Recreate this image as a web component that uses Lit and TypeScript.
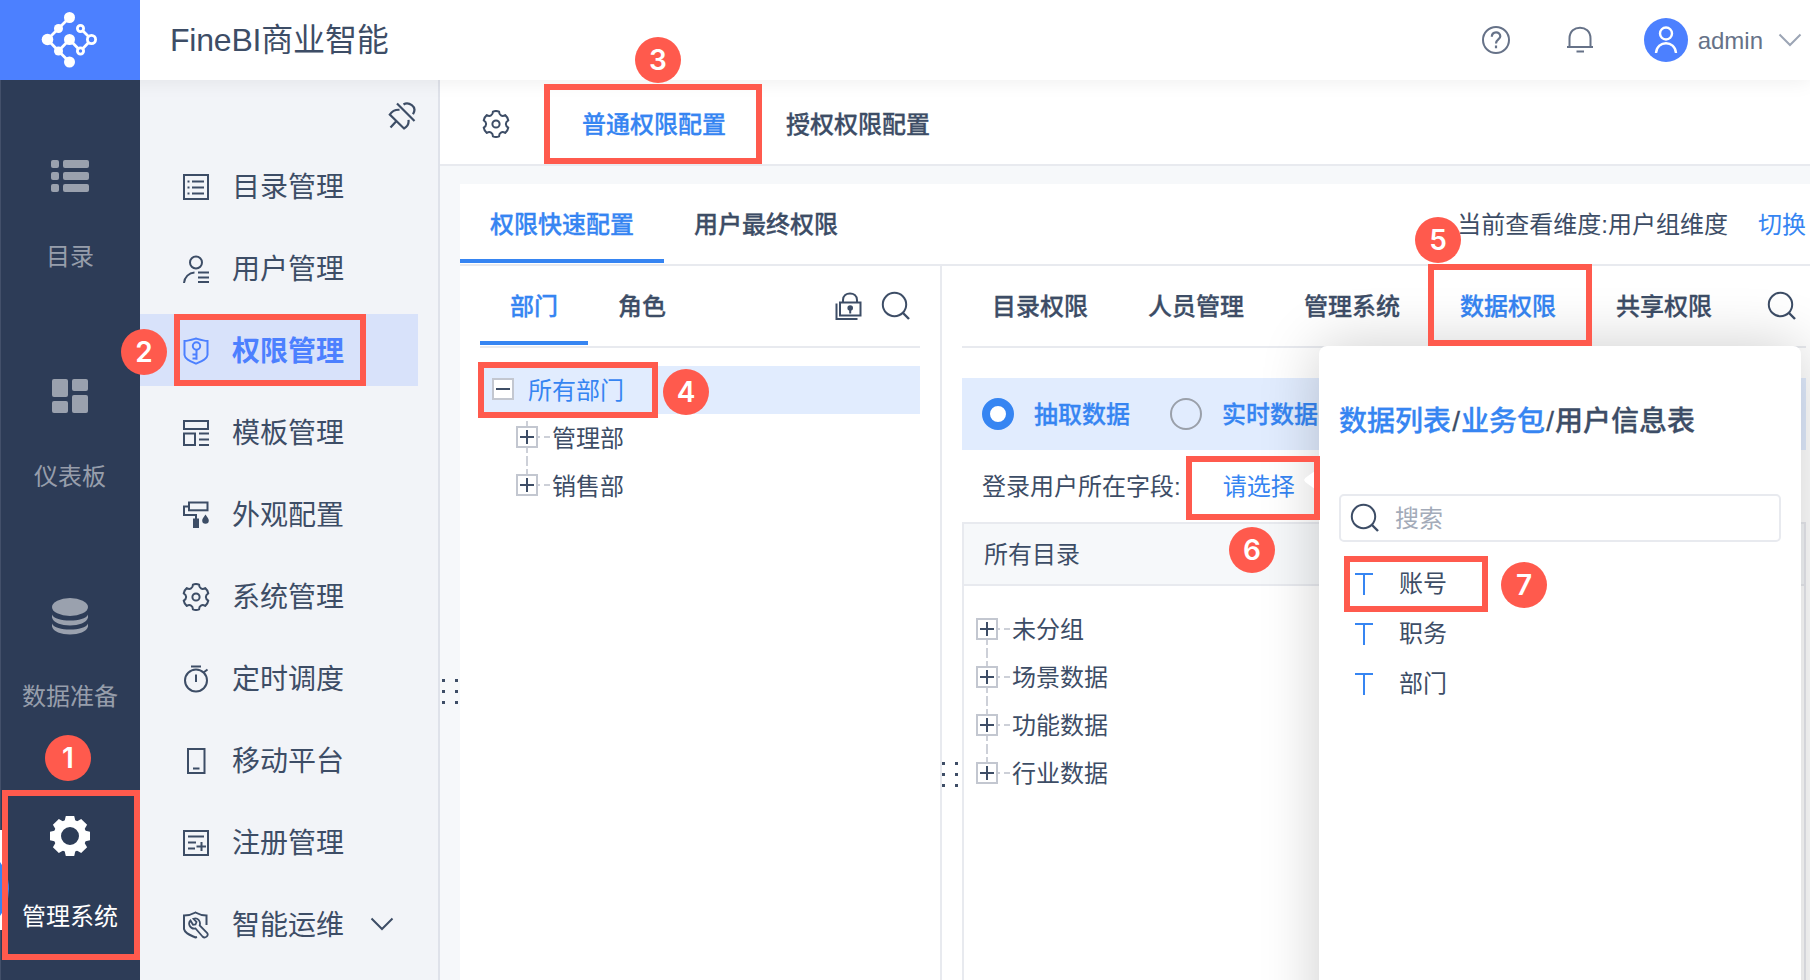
/**
 * FineBI admin console: permission management page with the numbered
 * walkthrough marks on top.
 */

import { LitElement, html, css, svg, nothing } from 'lit';
import { customElement, property, state } from 'lit/decorators.js';
import { classMap } from 'lit/directives/class-map.js';
import { styleMap } from 'lit/directives/style-map.js';

const polar = (r: number, deg: number) => {
  const a = (deg * Math.PI) / 180;
  return `${(14 + r * Math.sin(a)).toFixed(2)} ${(14 - r * Math.cos(a)).toFixed(2)}`;
};

// Six-lobed gear outline on the 28px grid
const gearPath = () => {
  let d = `M${polar(12.8, -14)}`;
  for (let a = 0; a < 360; a += 60) {
    d += `Q${polar(13.6, a)} ${polar(12.8, a + 14)}`;
    d += `C${polar(9.2, a + 19)} ${polar(9.2, a + 41)} ${polar(12.8, a + 46)}`;
  }
  return d + 'Z';
};

const teeth = [0, 45, 90, 135, 180, 225, 270, 315];

// Every outline icon is drawn on a 28x28 grid unless sized otherwise
const icons: Record<string, { size?: [number, number]; body: unknown }> = {
  logo: {
    size: [60, 60],
    body: svg`
      <path d="M29.5 7.5 18.5 18.5 7.5 29.5 18.5 41 29.5 52M18.5 41 29.5 29.5 40.5 41 51.5 29.5 40.5 18.5" stroke-width="2.8"/>
      <g fill="currentColor" stroke="none">
        <circle cx="29.5" cy="7.5" r="5.5"/><circle cx="18.5" cy="18.5" r="4.5"/>
        <circle cx="7.5" cy="29.5" r="5.8"/><circle cx="29.5" cy="29.5" r="5.5"/>
        <circle cx="18.5" cy="41" r="4.5"/><circle cx="29.5" cy="52" r="5.5"/>
      </g>
      <g fill="#4c80ff" stroke-width="2.8">
        <circle cx="40.5" cy="18.5" r="3.1"/><circle cx="51.5" cy="29.5" r="4.1"/><circle cx="40.5" cy="41" r="3.1"/>
      </g>`,
  },
  list: {
    size: [40, 40],
    body: svg`<g fill="currentColor" stroke="none">
      ${[4, 16, 28].map((y) => svg`<rect x="1" y=${y} width="8" height="8" rx="2"/><rect x="13" y=${y} width="26" height="8" rx="2"/>`)}
    </g>`,
  },
  board: {
    size: [40, 40],
    body: svg`<g fill="currentColor" stroke="none">
      <rect x="2" y="3" width="16" height="18" rx="2"/><rect x="22" y="3" width="16" height="12" rx="2"/>
      <rect x="2" y="25" width="16" height="12" rx="2"/><rect x="22" y="19" width="16" height="18" rx="2"/>
    </g>`,
  },
  database: {
    size: [40, 40],
    body: svg`<g fill="currentColor" stroke="none">
      <ellipse cx="20" cy="11" rx="18" ry="9"/>
      <path d="M2 18.5C5 26.5 35 26.5 38 18.5V21.5C36 32 4 32 2 21.5Z"/>
      <path d="M2 27.5C5 35.5 35 35.5 38 27.5V30.5C36 41 4 41 2 30.5Z"/>
    </g>`,
  },
  cog: {
    size: [40, 40],
    body: svg`<circle cx="20" cy="20" r="12.7" stroke-width="7.4"/>
      <g fill="currentColor" stroke="none">
        ${teeth.map((a) => svg`<path d="M-5.5-14.5-4.2-20H4.2L5.5-14.5Z" transform="translate(20 20) rotate(${a})"/>`)}
      </g>`,
  },
  gear: { body: svg`<path d=${gearPath()} stroke-linejoin="round"/><circle cx="14" cy="14" r="3.6"/>` },
  unpin: {
    body: svg`<path d="M9 1.5 26.5 19M15.5 2.5C20-.5 30 4 25 12.2M11.5 7.800C6.500 7.500 3.800 9.500 1.800 12.500L16 26.500C19.500 24.500 21 21.500 20.500 17.800M8.500 19 2.500 25.500" stroke-width="2.2"/>`,
  },
  catalog: {
    body: svg`<rect x="2" y="2" width="24" height="24"/><path d="M10 8.500H22M10 14.500H22M10 20.500H22M5.500 8.500H7.500M5.500 14.500H7.500M5.500 20.500H7.500"/>`,
  },
  user: {
    body: svg`<circle cx="14" cy="7.5" r="6"/><path d="M2 28C2.500 22 7 17.800 12.500 17.500M16 17.500H27M16 22.500H27M16 27H27"/>`,
  },
  shield: {
    body: svg`<path d="M14 1.500C17.500 2.500 21.500 3.800 25.500 4V18C25 22.500 19 24.500 14 26.700 9 24.500 3 22.500 2.500 18V4C6.500 3.800 10.500 2.500 14 1.500Z"/>
      <circle cx="14.5" cy="9" r="3.7"/><path d="M14.500 12.500V22.800M14.500 17.500H10.500M14.500 21.500H10.500"/>`,
  },
  template: {
    body: svg`<rect x="2" y="2" width="24" height="8"/><rect x="2" y="14.5" width="11" height="11.5"/><path d="M17 14.500H27M17 20.500H27M17 26H27"/>`,
  },
  paint: {
    body: svg`<rect x="7" y="1.5" width="18.5" height="7.8"/><path d="M7 5.500H2V14H14V18"/>
      <path d="M11 17.500H17V27H11ZM23.500 13.500C25.500 16.500 26.800 18 26.800 19.500A3.300 3.300 0 0 1 20.200 19.500C20.200 18 21.500 16.500 23.500 13.500Z" fill="currentColor" stroke="none"/>`,
  },
  timer: {
    body: svg`<circle cx="14" cy="15.5" r="11"/><path d="M9 1.500H19M14 9.500V17M21.500 7.500 25.500 4.500"/>`,
  },
  mobile: { body: svg`<rect x="6" y="2" width="16.5" height="24"/><path d="M11 21.500H17.500"/>` },
  register: {
    body: svg`<rect x="2" y="2" width="24" height="24"/><path d="M6 7.500H22M6 13.500H14M6 19.500H13M14.500 17.500H24M19.500 13V22"/>`,
  },
  ops: {
    body: svg`<path d="M24.500 14V4.500C21 4.500 17 3.500 13.500 1.500 10 3.500 6 4.500 2 4.500V18C3 22.500 8 24 13.500 26.500L15 26"/>
      <path d="M8.500 9.500C5.500 12.500 8 18.500 13.500 17.500L20.500 25.500C23 28 27.500 24.500 25 21.800L17.700 14.500C19 9.500 15.500 6.500 11.500 7.800L14.500 11 13.500 13.500 11 13.800Z" stroke-width="1.8"/>`,
  },
  down: { size: [24, 14], body: svg`<path d="M1.500 1.500 12 12 22.500 1.500"/>` },
  help: {
    body: svg`<circle cx="14" cy="14" r="13"/><path d="M9.800 10.800C9.800 5 18.300 5 18.300 10.300 18.300 13.500 14 13.500 14 17.500M14 19.500V22.200" stroke-width="2.2"/>`,
  },
  bell: { body: svg`<path d="M3.500 21V12.500C3.500-2 24.500-2 24.500 12.500V21M1 21H27M10.500 25.500H18"/>` },
  avatar: {
    size: [44, 44],
    body: svg`<circle cx="22" cy="15.5" r="6" stroke-width="2.4"/><path d="M12 35C13 22 31 22 32 35" stroke-width="2.4"/>`,
  },
  lock: {
    body: svg`<rect x="5" y="10.5" width="20.5" height="13"/><path d="M8 10V8C8-.800 22-.800 22 8V10M1.500 11.500V27H22.500M15.200 16V21.500"/>
      <circle cx="15.2" cy="16" r="2.8" fill="currentColor" stroke="none"/>`,
  },
  search: { size: [30, 30], body: svg`<circle cx="13.5" cy="13.5" r="11.7"/><path d="M22 22 28 28" stroke-width="2.4"/>` },
  text: { size: [18, 22], body: svg`<path d="M0 1H18M9 1V22"/>` },
};

const icon = (name: string) => {
  const { size: [w, h] = [28, 28], body } = icons[name];
  return html`<svg width=${w} height=${h} viewBox="0 0 ${w} ${h}" fill="none" stroke="currentColor" stroke-width="2">${body}</svg>`;
};

interface Mark {
  n: number;
  box: [number, number, number, number];
  dot: [number, number];
}

const rail = [
  { icon: 'list', label: '目录' },
  { icon: 'board', label: '仪表板' },
  { icon: 'database', label: '数据准备' },
  { icon: 'cog', label: '管理系统' },
];

const menu = [
  { icon: 'catalog', label: '目录管理' },
  { icon: 'user', label: '用户管理' },
  { icon: 'shield', label: '权限管理' },
  { icon: 'template', label: '模板管理' },
  { icon: 'paint', label: '外观配置' },
  { icon: 'gear', label: '系统管理' },
  { icon: 'timer', label: '定时调度' },
  { icon: 'mobile', label: '移动平台' },
  { icon: 'register', label: '注册管理' },
  { icon: 'ops', label: '智能运维', expandable: true },
];

// box is x, y, width, height; dot is the centre of the number
const marks: Mark[] = [
  { n: 1, box: [2, 790, 138, 170], dot: [68, 758] },
  { n: 2, box: [174, 314, 192, 72], dot: [144, 352] },
  { n: 3, box: [544, 84, 218, 80], dot: [658, 60] },
  { n: 4, box: [478, 362, 180, 56], dot: [686, 392] },
  { n: 5, box: [1428, 264, 164, 82], dot: [1438, 240] },
  { n: 6, box: [1186, 456, 134, 64], dot: [1252, 550] },
  { n: 7, box: [1344, 556, 144, 56], dot: [1524, 585] },
];

@customElement('bi-tree')
export class BiTree extends LitElement {
  static styles = css`
    :host {
      display: block;
    }

    .row {
      display: flex;
      align-items: center;
      height: 48px;
    }

    .row.root {
      padding-left: 12px;
      background: #e1ecfe;
      color: #3685f2;
    }

    .label {
      height: 48px;
      line-height: 50px;
    }

    .row.root .label {
      padding-left: 14px;
    }

    .nested {
      padding-left: 36px;
    }

    .toggle {
      box-sizing: border-box;
      width: 22px;
      height: 22px;
      border: 2px solid #c3c7d0;
      background: #fff;
      color: #3d4d66;
      display: flex;
      flex: none;
    }

    .row.root .toggle {
      margin-bottom: 2px;
    }

    .cell {
      display: flex;
      flex-direction: column;
      align-items: center;
      height: 48px;
      width: 22px;
      flex: none;
    }

    .nested .cell,
    .nested .branch {
      margin-top: -2px;
    }

    .stem {
      width: 2px;
      flex: 1;
      background: repeating-linear-gradient(#cdd0d8 0 5px, transparent 5px 8px);
    }

    .stem.none {
      background: none;
    }

    .branch {
      width: 12px;
      height: 2px;
      margin-right: 2px;
      background: linear-gradient(90deg, #cdd0d8 0 2px, transparent 2px 6px, #cdd0d8 6px 12px);
    }
  `;

  @property() root = '';
  @property({ attribute: false }) nodes: string[] = [];

  private toggle(open: boolean) {
    return html`<span class="toggle">
      <svg width="18" height="18" stroke="currentColor" stroke-width="2">
        <path d=${open ? 'M2 9H16' : 'M2 9H16M9 2V16'} />
      </svg>
    </span>`;
  }

  render() {
    return html`
      ${this.root ? html`<div class="row root">${this.toggle(true)}<span class="label">${this.root}</span></div>` : nothing}
      <div class=${classMap({ nested: !!this.root })}>
        ${this.nodes.map((node, i) => html`
          <div class="row">
            <span class="cell">
              <span class=${classMap({ stem: true, none: !this.root && i === 0 })}></span>
              ${this.toggle(false)}
              <span class=${classMap({ stem: true, none: i === this.nodes.length - 1 })}></span>
            </span>
            <span class="branch"></span>
            <span class="label">${node}</span>
          </div>
        `)}
      </div>
    `;
  }
}

@customElement('app-root')
export class AppRoot extends LitElement {
  static styles = css`
    :host {
      display: flex;
      flex-direction: column;
      position: relative;
      width: 1810px;
      height: 980px;
      overflow: hidden;
      background: #f6f8fa;
      color: #3d4d66;
      font: 24px 'Liberation Sans', 'Noto Sans CJK SC', sans-serif;
      white-space: nowrap;
      --blue: #3685f2;
      --brand: #4c80ff;
      --line: #e8eaef;
      --mark: #ff5a4d;
    }

    svg {
      display: block;
      flex: none;
    }

    header {
      display: flex;
      align-items: center;
      flex: none;
      height: 80px;
      background: #fff;
      box-shadow: 0 0 20px rgba(0, 0, 0, 0.08);
      z-index: 1;
    }

    .logo {
      display: flex;
      box-sizing: border-box;
      width: 140px;
      height: 80px;
      padding: 10px 0 0 40px;
      background: var(--brand);
      color: #fff;
    }

    .product {
      flex: 1;
      padding-left: 30px;
      font-size: 32px;
      letter-spacing: -0.2px;
      line-height: 80px;
    }

    .tools {
      display: flex;
      align-items: center;
      color: #667288;
      padding-right: 8px;
    }

    .tools .bell {
      margin: 0 50px 0 56px;
    }

    .avatar {
      border-radius: 50%;
      background: var(--brand);
      color: #fff;
      margin-right: 10px;
    }

    .tools .name {
      padding-top: 2px;
    }

    .tools .caret {
      margin-left: 15px;
      color: #9ca5b5;
    }

    .shell {
      display: flex;
      flex: 1;
      min-height: 0;
    }

    .rail {
      width: 140px;
      flex: none;
      background: #2d3c57;
      color: rgba(255, 255, 255, 0.52);
      z-index: 2;
      box-shadow: inset 1px 0 #43506a;
    }

    .rail-item {
      display: flex;
      flex-direction: column;
      align-items: center;
      box-sizing: border-box;
      height: 220px;
      padding-top: 76px;
      gap: 41px;
      line-height: 40px;
    }

    .rail-item.active {
      color: #fff;
    }

    .menu {
      box-sizing: border-box;
      width: 300px;
      flex: none;
      border-right: 2px solid #dfe2ea;
      background: #f2f4f8;
    }

    .pin {
      display: flex;
      justify-content: flex-end;
      box-sizing: border-box;
      height: 70px;
      padding: 22px 22px 0 0;
    }

    .menu-item {
      display: flex;
      align-items: center;
      box-sizing: border-box;
      height: 72px;
      margin: 0 20px 10px 0;
      padding: 2px 0 0 42px;
      gap: 22px;
      font-size: 28px;
    }

    .menu-item .label {
      height: 70px;
      line-height: 71px;
    }

    .menu-item.active {
      background: #d8e2fa;
      color: var(--brand);
      font-weight: 700;
    }

    .menu-item .caret {
      margin: -2px 0 0 4px;
    }

    .grip {
      display: grid;
      grid-template-columns: 3px 3px;
      grid-auto-rows: 3px;
      gap: 8px 10px;
    }

    .grip i {
      background: #3d4d66;
    }

    .gutter {
      box-sizing: border-box;
      width: 20px;
      flex: none;
    }

    .gutter.outer {
      padding: 513px 0 0 2px;
    }

    .gutter.inner {
      padding: 496px 0 0 0;
    }

    .main {
      display: flex;
      flex-direction: column;
      flex: 1;
      min-width: 0;
    }

    .topbar {
      display: flex;
      align-items: center;
      box-sizing: border-box;
      height: 86px;
      flex: none;
      padding: 3px 0 0 42px;
      background: #fff;
      border-bottom: 2px solid var(--line);
    }

    .topbar .tab {
      height: 80px;
      padding: 0 0 0 60px;
      line-height: 82px;
    }

    .topbar .tab:first-of-type {
      padding-left: 72px;
    }

    .tab {
      padding: 0 30px;
      font-weight: 500;
      -webkit-text-stroke: 0.3px;
    }

    .tab.active {
      color: var(--blue);
    }

    .body {
      display: flex;
      flex: 1;
      min-height: 0;
    }

    .card {
      display: flex;
      flex-direction: column;
      flex: 1;
      margin-top: 18px;
      background: #fff;
    }

    .tabs {
      display: flex;
      box-sizing: border-box;
      height: 82px;
      flex: none;
      border-bottom: 2px solid var(--line);
      line-height: 82px;
    }

    .tabs .tab {
      box-sizing: border-box;
      height: 79px;
    }

    .tabs .tab.line {
      border-bottom: 4px solid var(--blue);
    }

    .tabs .fill {
      flex: 1;
    }

    .tabs svg {
      align-self: center;
    }

    .switch {
      padding: 0 4px 0 30px;
      color: var(--blue);
    }

    .panes {
      display: flex;
      flex: 1;
      min-height: 0;
    }

    .dept {
      box-sizing: border-box;
      width: 482px;
      flex: none;
      padding: 0 20px;
      border-right: 2px solid var(--line);
    }

    .dept .tabs svg {
      margin-right: 18px;
    }

    .dept .tabs svg:last-child {
      margin-right: 9px;
    }

    .dept bi-tree {
      margin-top: 18px;
    }

    .perm {
      display: flex;
      flex-direction: column;
      flex: 1;
      min-width: 0;
      margin-right: 4px;
    }

    .perm .tabs svg {
      margin-right: 9px;
    }

    .modes {
      display: flex;
      align-items: center;
      height: 72px;
      flex: none;
      margin-top: 30px;
      padding-left: 20px;
      background: #e1ecfe;
      color: var(--blue);
      font-weight: 500;
      -webkit-text-stroke: 0.3px;
    }

    .radio {
      box-sizing: border-box;
      width: 32px;
      height: 32px;
      margin-right: 20px;
      border: 2px solid #9aa0aa;
      border-radius: 50%;
    }

    .radio.on {
      border: 8px solid var(--blue);
      background: #fff;
    }

    .modes .label {
      height: 72px;
      margin-right: 40px;
      line-height: 74px;
    }

    .field {
      display: flex;
      height: 72px;
      flex: none;
      padding-left: 20px;
      line-height: 74px;
    }

    .pick {
      margin-left: 42px;
      color: var(--blue);
    }

    .table {
      flex: 1;
      border: 2px solid var(--line);
      border-bottom: 0;
    }

    .thead {
      height: 60px;
      padding-left: 20px;
      border-bottom: 2px solid var(--line);
      background: #f6f8fa;
      line-height: 62px;
    }

    .table bi-tree {
      margin: 19px 0 0 12px;
    }

    /* Field picker, opened from the "请选择" link */
    .popup {
      position: absolute;
      left: 1319px;
      top: 346px;
      box-sizing: border-box;
      width: 482px;
      height: 700px;
      padding: 52px 20px 0;
      border-radius: 8px;
      background: #fff;
      box-shadow: 0 0 60px rgba(0, 0, 0, 0.2);
      z-index: 3;
    }

    .arrow {
      position: absolute;
      left: -15px;
      top: 122px;
      width: 15px;
      height: 24px;
      background: #fff;
      clip-path: polygon(100% 0, 100% 100%, 8% 58%, 0 50%, 8% 42%);
    }

    .crumbs {
      font-size: 28px;
      font-weight: 500;
      line-height: 48px;
      -webkit-text-stroke: 0.3px;
    }

    .crumbs a {
      color: var(--blue);
    }

    .crumbs .sep {
      display: inline-block;
      width: 10px;
      text-align: center;
    }

    .search {
      display: flex;
      align-items: center;
      box-sizing: border-box;
      height: 48px;
      margin: 48px 0 17px;
      padding-left: 9px;
      gap: 15px;
      border: 2px solid var(--line);
      border-radius: 5px;
      line-height: 46px;
    }

    .search .hint {
      height: 44px;
      color: #a3abb9;
    }

    .option {
      display: flex;
      align-items: center;
      height: 50px;
      padding-left: 16px;
      gap: 26px;
      line-height: 50px;
    }

    .option svg {
      color: var(--blue);
    }

    .mark {
      position: absolute;
      box-sizing: border-box;
      border: 6px solid var(--mark);
      z-index: 4;
    }

    .dot {
      position: absolute;
      width: 46px;
      height: 46px;
      margin: -23px 0 0 -23px;
      border-radius: 50%;
      background: var(--mark);
      color: #fff;
      font: 600 28px/46px Inter, 'Liberation Sans', sans-serif;
      text-align: center;
      z-index: 4;
    }

    /* Docked assistant ball, mostly off the left edge */
    .dock {
      position: absolute;
      left: 0;
      top: 830px;
      width: 10px;
      height: 100px;
      overflow: hidden;
      background: linear-gradient(90deg, #fff 2px, transparent 2px);
      z-index: 3;
    }

    .ball {
      width: 90px;
      height: 90px;
      margin: 14px 0 0 -81px;
      border-radius: 50%;
      background: #3685f2;
    }
  `;

  @state() private railItem = '管理系统';
  @state() private menuItem = '权限管理';

  private grip() {
    return html`<div class="grip">${[1, 2, 3, 4, 5, 6].map(() => html`<i></i>`)}</div>`;
  }

  private renderRail() {
    return html`
      <nav class="rail">
        ${rail.map((r) => html`
          <div class=${classMap({ 'rail-item': true, active: r.label === this.railItem })} @click=${() => (this.railItem = r.label)}>
            ${icon(r.icon)}<span>${r.label}</span>
          </div>
        `)}
      </nav>
    `;
  }

  private renderMenu() {
    return html`
      <nav class="menu">
        <div class="pin">${icon('unpin')}</div>
        ${menu.map((m) => html`
          <div class=${classMap({ 'menu-item': true, active: m.label === this.menuItem })} @click=${() => (this.menuItem = m.label)}>
            ${icon(m.icon)}<span class="label">${m.label}</span>
            ${m.expandable ? html`<span class="caret">${icon('down')}</span>` : nothing}
          </div>
        `)}
      </nav>
    `;
  }

  private renderPopup() {
    return html`
      <div class="popup">
        <div class="arrow"></div>
        <div class="crumbs"><a>数据列表</a><span class="sep">/</span><a>业务包</a><span class="sep">/</span><span>用户信息表</span></div>
        <div class="search">${icon('search')}<span class="hint">搜索</span></div>
        ${['账号', '职务', '部门'].map((f) => html`<div class="option">${icon('text')}<span>${f}</span></div>`)}
      </div>
    `;
  }

  private renderMark({ n, box: [x, y, w, h], dot: [cx, cy] }: Mark) {
    const px = (v: number) => `${v}px`;
    return html`
      <div class="mark" style=${styleMap({ left: px(x), top: px(y), width: px(w), height: px(h) })}></div>
      <div class="dot" style=${styleMap({ left: px(cx), top: px(cy) })}>${n}</div>
    `;
  }

  render() {
    return html`
      <header>
        <div class="logo">${icon('logo')}</div>
        <div class="product">FineBI商业智能</div>
        <div class="tools">
          ${icon('help')}
          <span class="bell">${icon('bell')}</span>
          <span class="avatar">${icon('avatar')}</span>
          <span class="name">admin</span>
          <span class="caret">${icon('down')}</span>
        </div>
      </header>

      <div class="shell">
        ${this.renderRail()}
        ${this.renderMenu()}

        <div class="main">
          <div class="topbar">
            ${icon('gear')}
            <span class="tab active">普通权限配置</span>
            <span class="tab">授权权限配置</span>
          </div>

          <div class="body">
            <div class="gutter outer">${this.grip()}</div>
            <div class="card">
              <div class="tabs">
                <span class="tab line active">权限快速配置</span>
                <span class="tab">用户最终权限</span>
                <span class="fill"></span>
                <span>当前查看维度:用户组维度</span>
                <span class="switch">切换</span>
              </div>

              <div class="panes">
                <div class="dept">
                  <div class="tabs">
                    <span class="tab line active">部门</span>
                    <span class="tab">角色</span>
                    <span class="fill"></span>
                    ${icon('lock')}${icon('search')}
                  </div>
                  <bi-tree root="所有部门" .nodes=${['管理部', '销售部']}></bi-tree>
                </div>

                <div class="gutter inner">${this.grip()}</div>

                <div class="perm">
                  <div class="tabs">
                    <span class="tab">目录权限</span>
                    <span class="tab">人员管理</span>
                    <span class="tab">管理系统</span>
                    <span class="tab active">数据权限</span>
                    <span class="tab">共享权限</span>
                    <span class="fill"></span>
                    ${icon('search')}
                  </div>
                  <div class="modes">
                    <span class="radio on"></span><span class="label">抽取数据</span>
                    <span class="radio"></span><span class="label">实时数据</span>
                  </div>
                  <div class="field">
                    <span>登录用户所在字段:</span>
                    <span class="pick">请选择</span>
                  </div>
                  <div class="table">
                    <div class="thead">所有目录</div>
                    <bi-tree .nodes=${['未分组', '场景数据', '功能数据', '行业数据']}></bi-tree>
                  </div>
                </div>
              </div>
            </div>
          </div>
        </div>
      </div>

      ${this.renderPopup()}
      <div class="dock"><div class="ball"></div></div>
      ${marks.map((m) => this.renderMark(m))}
    `;
  }
}

declare global {
  interface HTMLElementTagNameMap {
    'app-root': AppRoot;
    'bi-tree': BiTree;
  }
}
